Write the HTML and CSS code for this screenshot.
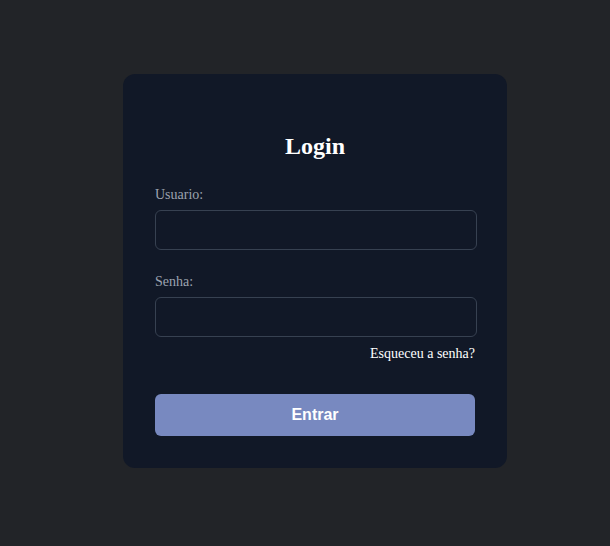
FILE: index.html
```html
<!DOCTYPE html>
<html lang="pt">
<head>
<meta charset="utf-8">
<title>Login</title>
<link rel="stylesheet" href="styles.css">
</head>
<body>
<main class="page">
  <form class="card">
    <h2 class="title">Login</h2>
    <label class="label" for="user">Usuario:</label>
    <input class="field" id="user" type="text">
    <label class="label label-2" for="pass">Senha:</label>
    <input class="field" id="pass" type="password">
    <a class="forgot" href="#">Esqueceu a senha?</a>
    <button class="btn" type="button">Entrar</button>
  </form>
</main>
</body>
</html>
```
FILE: styles.css
```css
* { box-sizing: border-box; }
html, body { margin: 0; padding: 0; }
body {
  background: #222428;
  font-family: "Liberation Serif", "Times New Roman", serif;
}
.page {
  min-height: 100vh;
  display: flex;
  align-items: center;
  justify-content: center;
  padding: 0 0 4px 20px;
}
.card {
  width: 384px;
  background: #111827;
  border-radius: 12px;
  padding: 32px;
  display: flex;
  flex-direction: column;
}
.title {
  margin: 26px 0 27px;
  font-size: 24px;
  line-height: 28px;
  font-weight: bold;
  color: #ffffff;
  text-align: center;
}
.label {
  font-size: 14px;
  line-height: 16px;
  color: #9ca3af;
  margin-bottom: 7px;
}
.label-2 { margin-top: 24px; }
.field {
  width: 322px;
  height: 40px;
  background: transparent;
  border: 1px solid #374151;
  border-radius: 6px;
  color: #fff;
  padding: 0 10px;
  outline: none;
}
.forgot {
  align-self: flex-end;
  margin: 9px 0 0 0;
  font-size: 14px;
  line-height: 16px;
  color: #ffffff;
  text-decoration: none;
}
.btn {
  margin-top: 32px;
  width: 320px;
  height: 42px;
  border: none;
  border-radius: 6px;
  background: #7889c0;
  color: #ffffff;
  font-family: "Liberation Sans", Arial, sans-serif;
  font-weight: bold;
  font-size: 16px;
}
```
